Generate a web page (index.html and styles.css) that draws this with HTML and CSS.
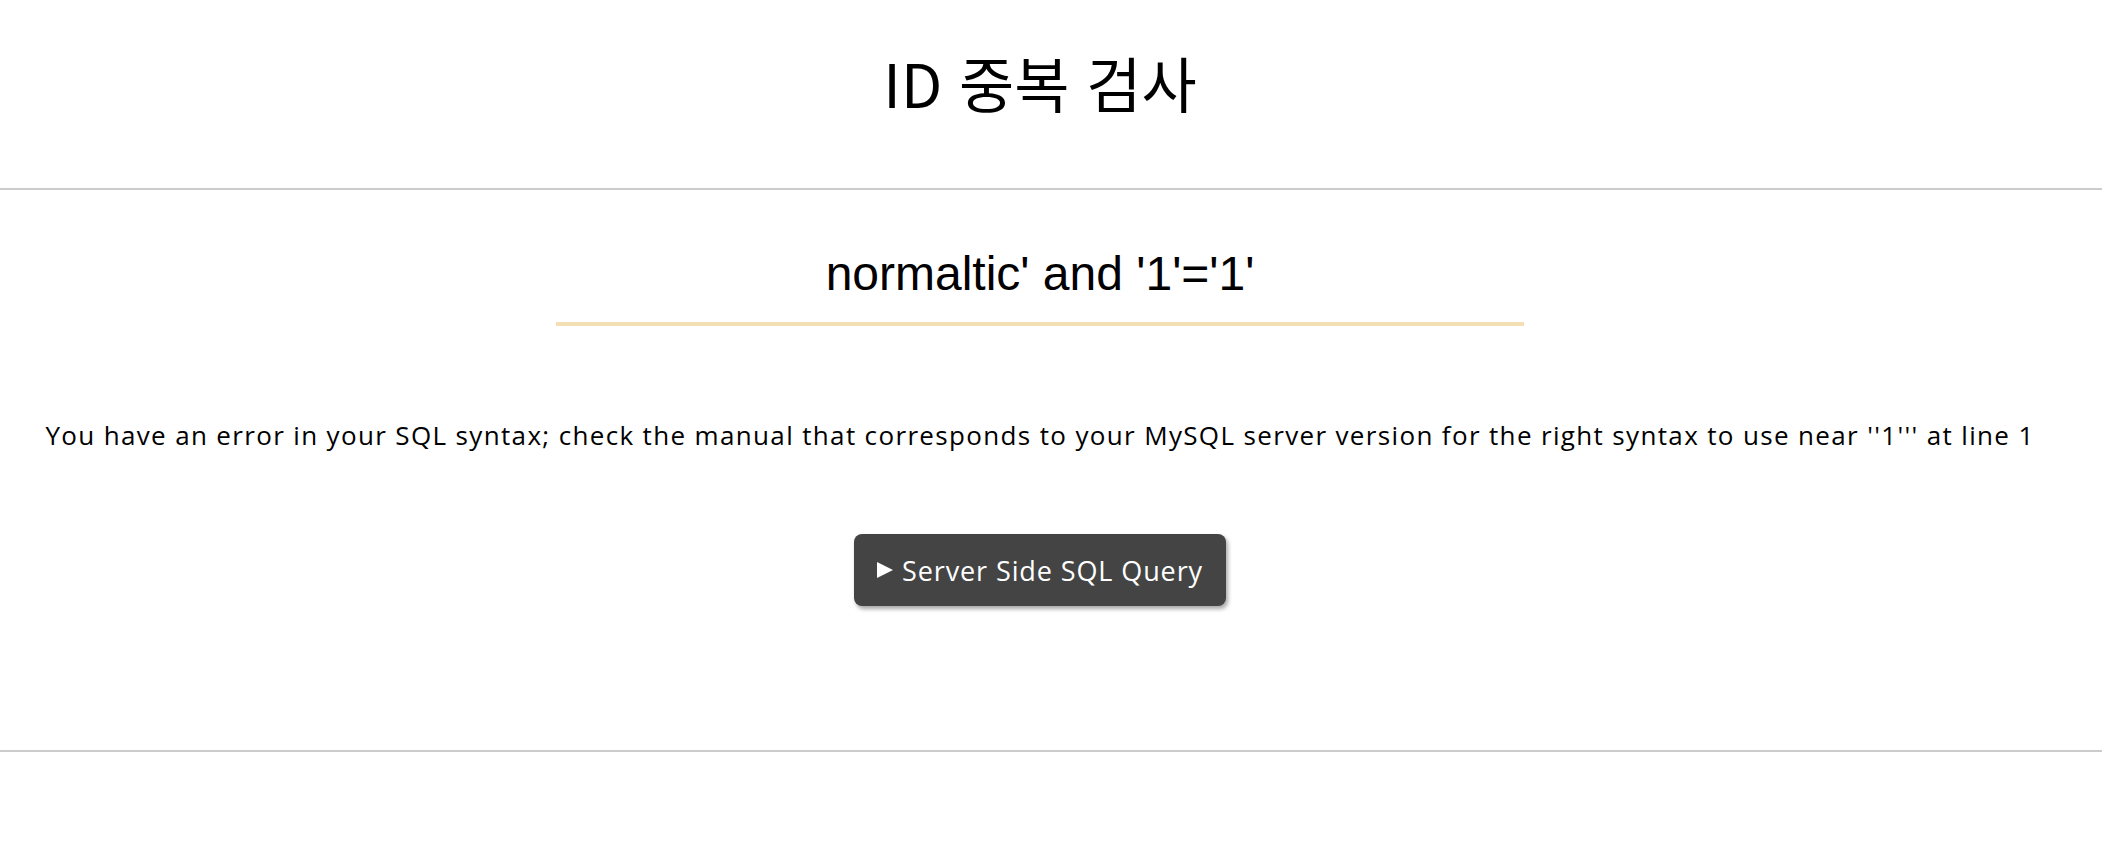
FILE: index.html
```html
<!DOCTYPE html>
<html lang="ko">
<head>
<meta charset="utf-8">
<title>ID 중복 검사</title>
<link rel="stylesheet" href="styles.css">
</head>
<body>
  <header class="page-head">
    <h1 class="title">ID 중복 검사</h1>
  </header>
  <hr class="rule">
  <main class="content">
    <input class="id-field" type="text" value="normaltic' and '1'='1'" readonly>
    <p class="error">You have an error in your SQL syntax; check the manual that corresponds to your MySQL server version for the right syntax to use near ''1''' at line 1</p>
    <button class="query-btn" type="button"><svg class="play" width="16" height="18" viewBox="0 0 16 18"><polygon points="0,1 16,9 0,17" fill="#fff"/></svg>Server Side SQL Query</button>
  </main>
  <hr class="rule">
</body>
</html>
```

FILE: styles.css
```css
html, body {
  margin: 0;
  padding: 0;
  background: #fff;
}

body {
  font-family: "Open Sans", "Noto Sans CJK KR", sans-serif;
  color: #000;
}

.page-head {
  padding: 42px 22px 0 0;
  height: 146px;
  text-align: center;
}

.title {
  margin: 0;
  font-family: "Noto Sans CJK KR", "Noto Sans", sans-serif;
  font-weight: 400;
  font-size: 60px;
  line-height: 80px;
}

.rule {
  margin: 0;
  border: 0;
  height: 2px;
  background: #cccccc;
}

.content {
  padding: 56px 22px 144px 0;
  display: flex;
  flex-direction: column;
  align-items: center;
}

.id-field {
  width: 968px;
  height: 56px;
  box-sizing: content-box;
  padding: 0 0 20px;
  margin: 0;
  border: 0;
  border-bottom: 4px solid #f2dfb4;
  outline: none;
  background: transparent;
  font-family: "Liberation Sans", Arial, sans-serif;
  font-size: 48px;
  line-height: 56px;
  text-align: center;
  color: #000;
}

.error {
  margin: 91px 0 0;
  font-size: 26px;
  line-height: 36px;
  letter-spacing: 1.35px;
  white-space: nowrap;
  color: #000;
}

.query-btn {
  margin-top: 81px;
  display: flex;
  align-items: center;
  gap: 9px;
  height: 72px;
  padding: 0 23px;
  border: 0;
  border-radius: 8px;
  background: #444444;
  color: #fff;
  font-family: "Open Sans", "Noto Sans CJK KR", sans-serif;
  font-size: 27px;
  letter-spacing: 0.9px;
  box-shadow: 2px 3px 4px rgba(0, 0, 0, 0.35);
}

.play {
  display: block;
}
```
